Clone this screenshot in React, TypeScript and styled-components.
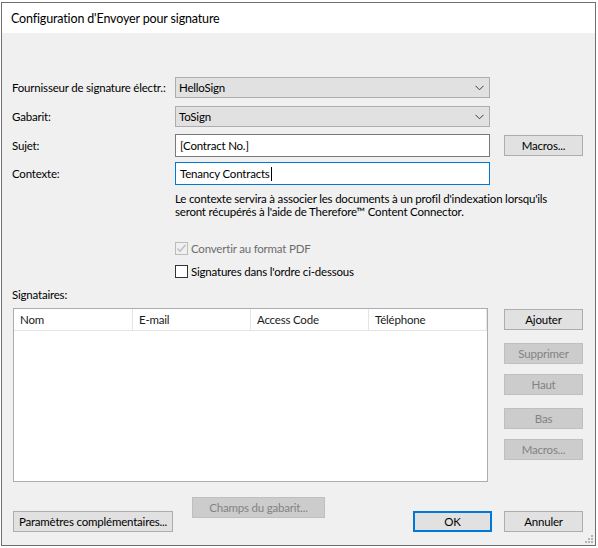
import React from 'react'
import styled, { createGlobalStyle } from 'styled-components'

const GlobalStyle = createGlobalStyle`
  html, body {
    margin: 0;
    padding: 0;
    background: #ffffff;
  }
  body {
    font-family: Lato, 'Noto Sans', sans-serif;
    font-size: 11.5px;
    letter-spacing: -0.2px;
    color: #000000;
  }
  * {
    box-sizing: border-box;
  }
`

const Window = styled.div`
  margin: 2px 0 0 1px;
  width: 595px;
  height: 544px;
  border: 1px solid #6f6f6f;
  display: flex;
  flex-direction: column;
  background: #ffffff;
`

const TitleBar = styled.div`
  height: 30px;
  flex-shrink: 0;
  display: flex;
  align-items: center;
  padding-left: 9px;
  font-size: 12.5px;
  letter-spacing: -0.15px;
  color: #000;
`

const Client = styled.div`
  position: relative;
  flex: 1;
  background: #f0f0f0;
  padding: 44px 12px 0 10px;
  display: flex;
  flex-direction: column;
`

const FormGrid = styled.div`
  display: grid;
  grid-template-columns: 149px 315px 79px;
  grid-template-rows: 29px 28px 28px 23px;
  column-gap: 14px;
  align-items: start;
`

const Label = styled.div<{ $h?: number }>`
  height: ${(p) => p.$h ?? 15}px;
  display: flex;
  align-items: center;
  white-space: nowrap;
`

const Select = styled.div`
  height: 21px;
  background: #e1e1e1;
  border: 1px solid #adadad;
  display: flex;
  align-items: center;
  justify-content: space-between;
  padding: 0 5px 0 3px;
`

const Input = styled.div<{ $focused?: boolean }>`
  height: 23px;
  background: #ffffff;
  border: 1px solid ${(p) => (p.$focused ? '#0078d7' : '#7a7a7a')};
  display: flex;
  align-items: center;
  padding: 0 4px;
  white-space: nowrap;
`

const Caret = styled.span`
  display: inline-block;
  width: 1px;
  height: 14px;
  background: #000;
  margin-left: 1px;
`

const Button = styled.div<{ $w?: number; $disabled?: boolean; $default?: boolean; $mt?: number }>`
  width: ${(p) => p.$w ?? 79}px;
  height: 21px;
  margin-top: ${(p) => p.$mt ?? 0}px;
  flex-shrink: 0;
  display: flex;
  align-items: center;
  justify-content: center;
  white-space: nowrap;
  background: ${(p) => (p.$disabled ? '#cccccc' : '#e1e1e1')};
  border: ${(p) => (p.$default ? '2px solid #0078d7' : p.$disabled ? '1px solid #bfbfbf' : '1px solid #adadad')};
  color: ${(p) => (p.$disabled ? '#838383' : '#000')};
`

const HelpText = styled.div`
  margin: 7px 0 0 163px;
  line-height: 13px;
  white-space: nowrap;
`

const CheckRow = styled.div<{ $mt: number; $disabled?: boolean }>`
  margin: ${(p) => p.$mt}px 0 0 163px;
  height: 15px;
  display: flex;
  align-items: center;
  gap: 3px;
  color: ${(p) => (p.$disabled ? '#6d6d6d' : '#000')};
`

const Box = styled.span<{ $disabled?: boolean }>`
  width: 13px;
  height: 13px;
  flex-shrink: 0;
  border: 1px solid ${(p) => (p.$disabled ? '#bcbcbc' : '#333333')};
  background: ${(p) => (p.$disabled ? '#f0f0f0' : '#ffffff')};
  display: flex;
  align-items: center;
  justify-content: center;
`

const SectionLabel = styled.div`
  margin-top: 8px;
  height: 15px;
  line-height: 15px;
`

const ListArea = styled.div`
  margin-top: 6px;
  display: flex;
  gap: 16px;
`

const ListView = styled.div`
  margin-left: 1px;
  width: 475px;
  height: 174px;
  border: 1px solid #adadad;
  background: #ffffff;
`

const Header = styled.div`
  display: grid;
  grid-template-columns: 119px 118px 118px 118px;
  height: 22px;
  border-bottom: 1px solid #e5e5e5;
`

const HeaderCell = styled.div`
  display: flex;
  align-items: center;
  padding-left: 6px;
  border-right: 1px solid #e5e5e5;
  color: #1a1a1a;
  white-space: nowrap;
`

const SideButtons = styled.div`
  display: flex;
  flex-direction: column;
`

const Footer = styled.div`
  margin-top: 15px;
  height: 35px;
  display: flex;
  padding-left: 1px;
`

const FooterSpacer = styled.div`
  flex: 1;
`

const Grip = styled.svg`
  position: absolute;
  right: 2px;
  bottom: 2px;
`

const Chevron = () => (
  <svg width="9" height="6" viewBox="0 0 9 6">
    <polyline points="0.5,0.8 4.5,4.8 8.5,0.8" fill="none" stroke="#3c3c3c" strokeWidth="1" />
  </svg>
)

const Check = () => (
  <svg width="11" height="11" viewBox="0 0 11 11">
    <polyline points="1.5,5.5 4,8.2 9.5,2" fill="none" stroke="#bcbcbc" strokeWidth="1.4" />
  </svg>
)

export default function App() {
  const sideButtons = [
    { label: 'Ajouter', mt: 1, disabled: false },
    { label: 'Supprimer', mt: 13, disabled: true },
    { label: 'Haut', mt: 10, disabled: true },
    { label: 'Bas', mt: 13, disabled: true },
    { label: 'Macros...', mt: 10, disabled: true },
  ]

  return (
    <>
      <GlobalStyle />
      <Window>
        <TitleBar>Configuration d'Envoyer pour signature</TitleBar>
        <Client>
          <FormGrid>
            <Label $h={21}>Fournisseur de signature électr.:</Label>
            <Select>
              <span>HelloSign</span>
              <Chevron />
            </Select>
            <div />

            <Label $h={21}>Gabarit:</Label>
            <Select>
              <span>ToSign</span>
              <Chevron />
            </Select>
            <div />

            <Label $h={23}>Sujet:</Label>
            <Input>[Contract No.]</Input>
            <Button $mt={1}>Macros...</Button>

            <Label $h={23}>Contexte:</Label>
            <Input $focused>
              Tenancy Contracts
              <Caret />
            </Input>
            <div />
          </FormGrid>

          <HelpText>
            Le contexte servira à associer les documents à un profil d'indexation lorsqu'ils
            <br />
            seront récupérés à l'aide de Therefore™ Content Connector.
          </HelpText>

          <CheckRow $mt={23} $disabled>
            <Box $disabled>
              <Check />
            </Box>
            Convertir au format PDF
          </CheckRow>
          <CheckRow $mt={8}>
            <Box />
            Signatures dans l'ordre ci-dessous
          </CheckRow>

          <SectionLabel>Signataires:</SectionLabel>

          <ListArea>
            <ListView>
              <Header>
                <HeaderCell>Nom</HeaderCell>
                <HeaderCell>E-mail</HeaderCell>
                <HeaderCell>Access Code</HeaderCell>
                <HeaderCell>Téléphone</HeaderCell>
              </Header>
            </ListView>
            <SideButtons>
              {sideButtons.map((b) => (
                <Button key={b.label} $mt={b.mt} $disabled={b.disabled}>
                  {b.label}
                </Button>
              ))}
            </SideButtons>
          </ListArea>

          <Footer>
            <Button $w={160} style={{ alignSelf: 'flex-end' }}>
              Paramètres complémentaires...
            </Button>
            <Button $w={133} $disabled style={{ marginLeft: 19 }}>
              Champs du gabarit...
            </Button>
            <FooterSpacer />
            <Button $default style={{ alignSelf: 'flex-end' }}>
              OK
            </Button>
            <Button style={{ alignSelf: 'flex-end', marginLeft: 12 }}>Annuler</Button>
          </Footer>

          <Grip width="8" height="8" viewBox="0 0 8 8">
            <rect x="6" y="0" width="2" height="2" fill="#b4b4b4" />
            <rect x="3" y="3" width="2" height="2" fill="#b4b4b4" />
            <rect x="6" y="3" width="2" height="2" fill="#b4b4b4" />
            <rect x="0" y="6" width="2" height="2" fill="#b4b4b4" />
            <rect x="3" y="6" width="2" height="2" fill="#b4b4b4" />
            <rect x="6" y="6" width="2" height="2" fill="#b4b4b4" />
          </Grip>
        </Client>
      </Window>
    </>
  )
}
